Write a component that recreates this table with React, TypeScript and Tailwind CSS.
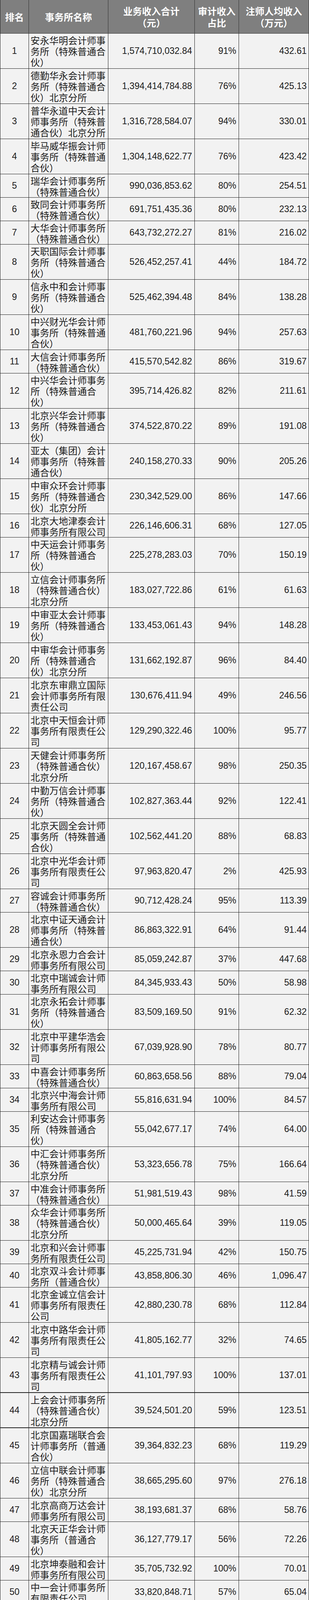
import React from "react";

type Row = [string[], string, string, string];

const rows: Row[] = [
  [["安永华明会计师事", "务所（特殊普通合", "伙）"], "1,574,710,032.84", "91%", "432.61"],
  [["德勤华永会计师事", "务所（特殊普通合", "伙）北京分所"], "1,394,414,784.88", "76%", "425.13"],
  [["普华永道中天会计", "师事务所（特殊普", "通合伙）北京分所"], "1,316,728,584.07", "94%", "330.01"],
  [["毕马威华振会计师", "事务所（特殊普通", "合伙）"], "1,304,148,622.77", "76%", "423.42"],
  [["瑞华会计师事务所", "（特殊普通合伙）"], "990,036,853.62", "80%", "254.51"],
  [["致同会计师事务所", "（特殊普通合伙）"], "691,751,435.36", "80%", "232.13"],
  [["大华会计师事务所", "（特殊普通合伙）"], "643,732,272.27", "81%", "216.02"],
  [["天职国际会计师事", "务所（特殊普通合", "伙）"], "526,452,257.41", "44%", "184.72"],
  [["信永中和会计师事", "务所（特殊普通合", "伙）"], "525,462,394.48", "84%", "138.28"],
  [["中兴财光华会计师", "事务所（特殊普通", "合伙）"], "481,760,221.96", "94%", "257.63"],
  [["大信会计师事务所", "（特殊普通合伙）"], "415,570,542.82", "86%", "319.67"],
  [["中兴华会计师事务", "所（特殊普通合", "伙）"], "395,714,426.82", "82%", "211.61"],
  [["北京兴华会计师事", "务所（特殊普通合", "伙）"], "374,522,870.22", "89%", "191.08"],
  [["亚太（集团）会计", "师事务所（特殊普", "通合伙）"], "240,158,270.33", "90%", "205.26"],
  [["中审众环会计师事", "务所（特殊普通合", "伙）北京分所"], "230,342,529.00", "86%", "147.66"],
  [["北京大地津泰会计", "师事务所有限公司"], "226,146,606.31", "68%", "127.05"],
  [["中天运会计师事务", "所（特殊普通合", "伙）"], "225,278,283.03", "70%", "150.19"],
  [["立信会计师事务所", "（特殊普通合伙）", "北京分所"], "183,027,722.86", "61%", "61.63"],
  [["中审亚太会计师事", "务所（特殊普通合", "伙）"], "133,453,061.43", "94%", "148.28"],
  [["中审华会计师事务", "所（特殊普通合", "伙）北京分所"], "131,662,192.87", "96%", "84.40"],
  [["北京东审鼎立国际", "会计师事务所有限", "责任公司"], "130,676,411.94", "49%", "246.56"],
  [["北京中天恒会计师", "事务所有限责任公", "司"], "129,290,322.46", "100%", "95.77"],
  [["天健会计师事务所", "（特殊普通合伙）", "北京分所"], "120,167,458.67", "98%", "250.35"],
  [["中勤万信会计师事", "务所（特殊普通合", "伙）"], "102,827,363.44", "92%", "122.41"],
  [["北京天圆全会计师", "事务所（特殊普通", "合伙）"], "102,562,441.20", "88%", "68.83"],
  [["北京中光华会计师", "事务所有限责任公", "司"], "97,963,820.47", "2%", "425.93"],
  [["容诚会计师事务所", "（特殊普通合伙）"], "90,712,428.24", "95%", "113.39"],
  [["北京中证天通会计", "师事务所（特殊普", "通合伙）"], "86,863,322.91", "64%", "91.44"],
  [["北京永恩力合会计", "师事务所有限公司"], "85,059,242.87", "37%", "447.68"],
  [["北京中瑞诚会计师", "事务所有限公司"], "84,345,933.43", "50%", "58.98"],
  [["北京永拓会计师事", "务所（特殊普通合", "伙）"], "83,509,169.50", "91%", "62.32"],
  [["北京中平建华浩会", "计师事务所有限公", "司"], "67,039,928.90", "78%", "80.77"],
  [["中喜会计师事务所", "（特殊普通合伙）"], "60,863,658.56", "88%", "79.04"],
  [["北京兴中海会计师", "事务所有限公司"], "55,816,631.94", "100%", "84.57"],
  [["利安达会计师事务", "所（特殊普通合", "伙）"], "55,042,677.17", "74%", "64.00"],
  [["中汇会计师事务所", "（特殊普通合伙）", "北京分所"], "53,323,656.78", "75%", "166.64"],
  [["中准会计师事务所", "（特殊普通合伙）"], "51,981,519.43", "98%", "41.59"],
  [["众华会计师事务所", "（特殊普通合伙）", "北京分所"], "50,000,465.64", "39%", "119.05"],
  [["北京和兴会计师事", "务所有限责任公司"], "45,225,731.94", "42%", "150.75"],
  [["北京双斗会计师事", "务所（普通合伙）"], "43,858,806.30", "46%", "1,096.47"],
  [["北京金诚立信会计", "师事务所有限责任", "公司"], "42,880,230.78", "68%", "112.84"],
  [["北京中路华会计师", "事务所有限责任公", "司"], "41,805,162.77", "32%", "74.65"],
  [["北京精与诚会计师", "事务所有限责任公", "司"], "41,101,797.93", "100%", "137.01"],
  [["上会会计师事务所", "（特殊普通合伙）", "北京分所"], "39,524,501.20", "59%", "123.51"],
  [["北京国嘉瑞联合会", "计师事务所（普通", "合伙）"], "39,364,832.23", "68%", "119.29"],
  [["立信中联会计师事", "务所（特殊普通合", "伙）北京分所"], "38,665,295.60", "97%", "276.18"],
  [["北京高商万达会计", "师事务所有限公司"], "38,193,681.37", "68%", "58.76"],
  [["北京天正华会计师", "事务所（普通合", "伙）"], "36,127,779.17", "56%", "72.26"],
  [["北京坤泰融和会计", "师事务所有限公司"], "35,705,732.92", "100%", "70.01"],
  [["中一会计师事务所", "有限责任公司"], "33,820,848.71", "57%", "65.04"],
  [["中逸会计师事务所", "有限公司"], "33,253,917.17", "44%", "72.29"],
  [["北京爱思济会计师", "事务所有限责任公", "司"], "32,901,978.42", "46%", "121.86"],
  [["北京中佳誉会计师", "事务所有限公司"], "32,883,758.45", "98%", "91.34"],
  [["中审国际会计师事", "务所有限公司"], "32,625,479.25", "34%", "271.88"],
  [["北京今创会计师事", "务所"], "30,601,848.81", "13%", "170.01"],
  [["华利信（北京）会", "计师事务所有限责", "任公司"], "29,248,246.69", "48%", "153.94"],
  [["北京中育才会计师", "事务所有限公司"], "28,637,635.28", "10%", "190.92"],
  [["天衡会计师事务所", "（特殊普通合伙）", "北京分所"], "26,901,588.08", "98%", "168.13"],
  [["北京希文会计师事", "务所有限责任公司"], "25,776,360.68", "41%", "214.80"],
  [["北京数圣会计师事", "务所有限公司"], "25,675,340.87", "78%", "106.98"],
  [["中建华会计师事务", "所有限责任公司"], "25,497,549.63", "35%", "41.13"],
  [["北京华安德会计师", "事务所"], "24,819,045.85", "50%", "118.19"],
  [["北京立瑞会计师事", "务所(普通合伙)"], "24,765,562.47", "59%", "225.14"],
  [["北京观正会计师事", "务所有限公司"], "24,613,148.05", "70%", "144.78"],
  [["北京中泽永诚会计", "师事务所有限公司"], "24,158,369.00", "79%", "50.33"],
  [["北京中润达会计师", "事务所有限公司"], "24,000,138.03", "58%", "64.87"],
  [["北京市华颂会计师", "事务所有限公司"], "23,005,225.51", "88%", "43.41"],
  [["北京中崇信会计师", "事务所有限责任公", "司"], "22,604,518.56", "57%", "141.28"],
  [["北京凌峰会计师事", "务所有限公司"], "21,570,899.07", "39%", "77.04"],
  [["北京嘉信达盛会计", "师事务所有限公司"], "21,391,118.73", "76%", "93.00"],
  [["北京创高助新会计", "师事务所（普通合", "伙）"], "21,347,900.48", "27%", "304.97"],
  [["北京中咨新世纪会", "计师事务所有限公", "司"], "21,000,863.92", "58%", "42.00"],
  [["北京金瑞永大会计", "师事务所有限公司"], "20,536,139.17", "74%", "146.69"],
  [["安衡（北京）会计", "师事务所有限责任", "公司"], "20,171,112.12", "71%", "61.12"],
  [["北京崇信会计师事", "务所有限公司"], "19,675,838.12", "100%", "218.62"],
  [["北京中燕通会计师", "事务所有限公司"], "19,604,016.49", "100%", "108.91"],
  [["北京中天永信会计", "师事务所（普通合", "伙）"], "19,585,820.61", "21%", "93.27"],
  [["北京中诚恒平会计", "师事务所有限公司"], "19,419,272.64", "67%", "129.46"],
  [["北京正衡东亚会计", "师事务所有限公司"], "19,287,934.68", "98%", "83.86"],
  [["中联会计师事务所", "有限公司"], "18,704,551.34", "6%", "233.81"],
  [["北京中京华建联会", "计师事务所有限公", "司"], "17,834,074.02", "25%", "61.50"],
  [["天华正信(北京)会", "计师事务所有限公", "司"], "17,744,341.90", "92%", "47.96"],
  [["中天恒信（北京）", "国际会计师事务所", "有限公司"], "17,438,167.63", "62%", "69.75"],
  [["北京哲明会计师事", "务所有限责任公司"], "17,021,408.02", "99%", "60.79"],
  [["北京中兆国际会计", "师事务所有限公司"], "16,553,711.39", "45%", "59.12"],
  [["北京国府嘉盈会计", "师事务所有限公司"], "16,450,142.92", "24%", "164.50"],
  [["北京恒介会计师事", "务所（普通合伙）"], "16,075,222.32", "80%", "94.56"],
  [["北京国誉会计师事", "务所有限公司"], "15,983,408.91", "0%", "61.47"],
  [["北京智富会计师事", "务所"], "15,795,738.85", "15%", "131.63"],
  [["北京永勤会计师事", "务所有限公司"], "15,739,935.40", "52%", "92.59"],
  [["北京亚洲会计师事", "务所（普通合伙）"], "15,570,734.03", "100%", "173.01"],
  [["中天银会计师事务", "所有限责任公司"], "15,549,875.31", "83%", "40.92"],
  [["北京匡正会计师事", "务所有限公司"], "15,122,219.17", "50%", "84.01"],
  [["北京中启恒会计师", "事务所有限责任公", "司"], "14,863,804.04", "83%", "165.15"],
  [["北京达兴会计师事", "务所有限责任公司"], "14,773,339.41", "97%", "77.75"],
  [["北京华龙鼎嘉会计", "师事务所有限公司"], "13,842,934.73", "102%", "51.27"],
  [["北京中则会计师事", "务所有限责任公司"], "13,835,859.85", "57%", "69.18"],
  [["希格玛会计师事务", "所（特殊普通合", "伙）北京分所"], "13,468,311.01", "68%", "168.35"],
  [["北京中永智会计师", "事务所有限公司"], "13,348,200.00", "82%", "66.74"],
  [["汇亚昊正（北京）", "会计师事务所有限", "公司"], "13,251,586.87", "90%", "94.65"],
];

function BodyRow({ rank, row }: { rank: number; row: Row }) {
  const [lines, total, pct, avg] = row;
  const tall = lines.length === 3;
  const thick = rank === 43 || rank === 44;
  const h = tall ? "h-[90px]" : "h-[60px]";
  const b = thick ? "border-b-2" : "border-b";
  return (
    <div className={`grid grid-cols-[73px_203px_221px_113px_179px] ${h}`}>
      <div className={`flex items-center justify-center border-r border-[#222] ${b} text-[23px]`}>
        {rank}
      </div>
      <div
        className={`border-r border-[#222] ${b} pl-[4px] pt-[3px] text-[24px] leading-[28px] [font-family:'Noto_Sans_CJK_SC','Liberation_Sans',sans-serif]`}
      >
        {lines.map((l, i) => (
          <div key={i} className="whitespace-nowrap">
            {l}
          </div>
        ))}
      </div>
      <div className={`flex items-center justify-end border-r border-[#222] ${b} pr-[6px] text-[23px]`}>
        {total}
      </div>
      <div className={`flex items-center justify-end border-r border-[#222] ${b} pr-[6px] text-[23px]`}>
        {pct}
      </div>
      <div className={`flex items-center justify-end border-r border-[#222] ${b} pr-[5px] text-[23px]`}>
        {avg}
      </div>
    </div>
  );
}

export default function App() {
  return (
    <div className="w-[790px] border-l border-[#222] bg-[#f2f2f2] text-[#1c1c1c] [font-family:'Liberation_Sans','Noto_Sans_CJK_SC',sans-serif]">
      <div className="grid h-[86px] grid-cols-[73px_203px_221px_113px_179px] bg-[#7f7f7f] text-[24px] font-bold leading-[30px] text-white [font-family:'Noto_Sans_CJK_SC','Liberation_Sans',sans-serif]">
        <div className="flex items-center justify-center border-r border-b border-[#333]">排名</div>
        <div className="flex items-center justify-center border-r border-b border-[#333]">事务所名称</div>
        <div className="flex flex-col items-center justify-center border-r border-b border-[#333]">
          <div>业务收入合计</div>
          <div>（元）</div>
        </div>
        <div className="flex flex-col items-center justify-center border-r border-b border-[#333]">
          <div>审计收入</div>
          <div>占比</div>
        </div>
        <div className="flex flex-col items-center justify-center border-r border-b border-[#333]">
          <div>注师人均收入</div>
          <div>（万元）</div>
        </div>
      </div>
      {rows.map((r, i) => (
        <BodyRow key={i} rank={i + 1} row={r} />
      ))}
    </div>
  );
}
